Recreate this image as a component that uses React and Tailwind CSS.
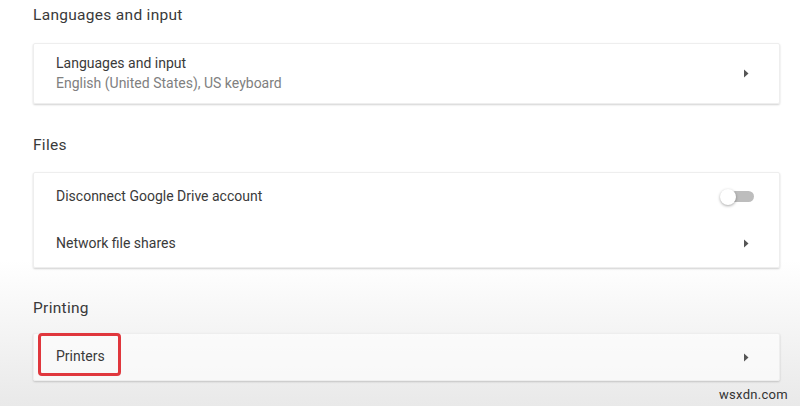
import { useState } from 'react';

function Arrow() {
  return (
    <svg className="w-[6px] h-[9px] text-[#555]" viewBox="0 0 6 9" fill="currentColor">
      <path d="M1 0.5 L5.5 4.5 L1 8.5 Z" />
    </svg>
  );
}

function Toggle() {
  return (
    <div className="relative w-[34px] h-[16px] flex items-center">
      <div className="absolute left-[4px] right-0 h-[11px] rounded-full bg-[#bdbdbd]" />
      <div className="absolute left-0 w-[16px] h-[16px] rounded-full bg-white shadow-[0_1px_3px_rgba(0,0,0,0.35)]" />
    </div>
  );
}

function Heading({ children, className = '' }) {
  return <h2 className={`text-[15.5px] leading-[20px] text-[#3a3a3a] tracking-[0.3px] ${className}`}>{children}</h2>;
}

function Card({ children, className = '' }) {
  return (
    <div className={`relative bg-white/60 rounded-[2px] border border-[#eeeeee] shadow-[0_1px_2px_rgba(0,0,0,0.18)] ${className}`}>
      {children}
    </div>
  );
}

export default function App() {
  const [driveOn] = useState(false);

  return (
    <div
      className="relative w-[800px] h-[406px] overflow-hidden bg-[linear-gradient(to_bottom,#ffffff_0%,#ffffff_64%,#e9e9e9_100%)] pl-[33px] pr-[20px] pt-[5px]"
      style={{ fontFamily: 'Roboto, "Noto Sans", sans-serif' }}
    >
      {/* Languages and input */}
      <Heading>Languages and input</Heading>
      <Card className="mt-[18px] h-[61px]">
        <div className="flex items-center h-full pl-[22px] pr-[30px]">
          <div className="flex-1 pb-[2px]">
            <div className="text-[14px] leading-[20px] text-[#3a3a3a]">Languages and input</div>
            <div className="text-[14px] leading-[20px] text-[#808080]">English (United States), US keyboard</div>
          </div>
          <Arrow />
        </div>
      </Card>

      {/* Files */}
      <Heading className="mt-[31px]">Files</Heading>
      <Card className="mt-[17px]">
        <div className="flex items-center h-[47px] pl-[22px] pr-[25px]">
          <div className="flex-1 text-[14px] text-[#3a3a3a]">Disconnect Google Drive account</div>
          {!driveOn && <Toggle />}
        </div>
        <div className="flex items-center h-[47px] pl-[22px] pr-[30px]">
          <div className="flex-1 text-[14px] text-[#3a3a3a]">Network file shares</div>
          <Arrow />
        </div>
      </Card>

      {/* Printing */}
      <Heading className="mt-[30px]">Printing</Heading>
      <Card className="mt-[15px] h-[48px] bg-[#f3f3f3]/70">
        <div className="flex items-center h-full pl-[22px] pr-[30px]">
          <div className="flex-1 text-[14px] text-[#3a3a3a] pb-[2px]">Printers</div>
          <Arrow />
        </div>
        <div className="absolute left-[4px] -top-[1px] w-[83px] h-[43px] rounded-[4px] border-[3px] border-[#e0373d]" />
      </Card>

      <div className="absolute right-[12px] bottom-[2px] text-[13px] text-[#333] tracking-[0.3px]">wsxdn.com</div>
    </div>
  );
}
